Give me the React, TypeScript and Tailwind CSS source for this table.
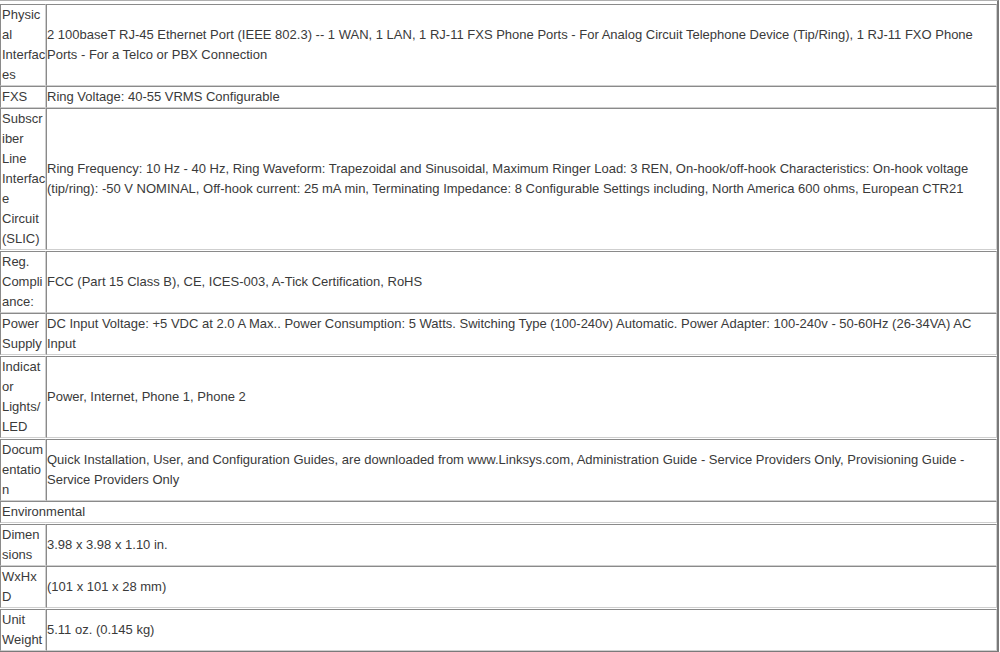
import React from "react";

type Row = { label?: string[]; value: string; span?: boolean; gap?: boolean };

const rows: Row[] = [
  {
    label: ["Physic", "al", "Interfac", "es"],
    value:
      "2 100baseT RJ-45 Ethernet Port (IEEE 802.3) -- 1 WAN, 1 LAN, 1 RJ-11 FXS Phone Ports - For Analog Circuit Telephone Device (Tip/Ring), 1 RJ-11 FXO Phone Ports - For a Telco or PBX Connection",
  },
  { label: ["FXS"], value: "Ring Voltage: 40-55 VRMS Configurable" },
  {
    label: ["Subscr", "iber", "Line", "Interfac", "e", "Circuit", "(SLIC)"],
    value:
      "Ring Frequency: 10 Hz - 40 Hz, Ring Waveform: Trapezoidal and Sinusoidal, Maximum Ringer Load: 3 REN, On-hook/off-hook Characteristics: On-hook voltage (tip/ring): -50 V NOMINAL, Off-hook current: 25 mA min, Terminating Impedance: 8 Configurable Settings including, North America 600 ohms, European CTR21",
  },
  {
    label: ["Reg.", "Compli", "ance:"],
    value: "FCC (Part 15 Class B), CE, ICES-003, A-Tick Certification, RoHS",
    gap: true,
  },
  {
    label: ["Power", "Supply"],
    value:
      "DC Input Voltage: +5 VDC at 2.0 A Max.. Power Consumption: 5 Watts. Switching Type (100-240v) Automatic. Power Adapter: 100-240v - 50-60Hz (26-34VA) AC Input",
  },
  {
    label: ["Indicat", "or", "Lights/", "LED"],
    value: "Power, Internet, Phone 1, Phone 2",
    gap: true,
  },
  {
    label: ["Docum", "entatio", "n"],
    value:
      "Quick Installation, User, and Configuration Guides, are downloaded from www.Linksys.com, Administration Guide - Service Providers Only, Provisioning Guide - Service Providers Only",
    gap: true,
  },
  { value: "Environmental", span: true },
  { label: ["Dimen", "sions"], value: "3.98 x 3.98 x 1.10 in.", gap: true },
  { label: ["WxHx", "D"], value: "(101 x 101 x 28 mm)" },
  { label: ["Unit", "Weight"], value: "5.11 oz. (0.145 kg)", gap: true },
];

const cell =
  "border border-t-[#8a8a8a] border-l-[#8a8a8a] border-b-[#cfcfcf] border-r-[#cfcfcf]";

export default function App() {
  return (
    <div
      className="w-[1000px] h-[652px] overflow-hidden bg-white text-[13px] leading-[20px] text-[#3a3a3a]"
      style={{ fontFamily: '"Liberation Sans", Arial, sans-serif' }}
    >
      <div className="w-[999px] border-t border-t-[#b0b0b0] border-r-2 border-r-[#7a7a7a] border-b border-b-[#7a7a7a] pt-[3px] flex flex-col">
        {rows.map((r, i) =>
          r.span ? (
            <div key={i} className={`flex ${r.gap ? "mt-[1px]" : ""}`}>
              <div className={`flex-1 ${cell} pl-[1px]`}>{r.value}</div>
            </div>
          ) : (
            <div
              key={i}
              className={`grid grid-cols-[46px_1fr] ${r.gap ? "mt-[1px]" : ""}`}
            >
              <div className={`${cell} pl-[1px] whitespace-nowrap overflow-visible`}>
                {r.label!.map((l, j) => (
                  <div key={j}>{l}</div>
                ))}
              </div>
              <div className={`flex items-center ${cell} pr-[4px]`}>
                <span>{r.value}</span>
              </div>
            </div>
          )
        )}
      </div>
    </div>
  );
}
